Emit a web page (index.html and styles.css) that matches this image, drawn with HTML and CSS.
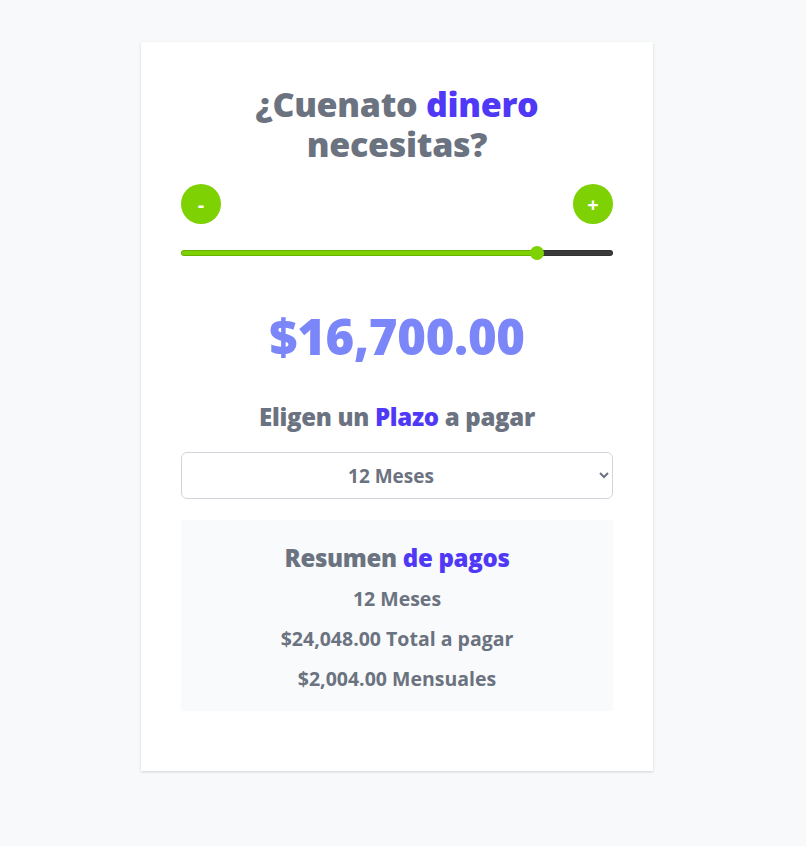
FILE: index.html
```html
<!DOCTYPE html>
<html lang="es">
<head>
  <meta charset="UTF-8">
  <meta name="viewport" content="width=device-width, initial-scale=1.0">
  <title>Prestamos</title>
  <link rel="stylesheet" href="styles.css">
</head>
<body>
  <div class="card">
    <h1 class="title">¿Cuenato <span class="accent">dinero</span> necesitas?</h1>

    <div class="buttons">
      <button class="round-btn">-</button>
      <button class="round-btn">+</button>
    </div>

    <input class="slider" type="range" min="0" max="20000" step="100" value="16700" style="background: linear-gradient(to right, #7ed102 0%, #7ed102 83.5%, #3a3a3a 83.5%, #3a3a3a 100%);">

    <p class="amount">$16,700.00</p>

    <h2 class="subtitle">Eligen un <span class="accent">Plazo</span> a pagar</h2>

    <select class="plazo">
      <option value="6">6 Meses</option>
      <option value="12" selected>12 Meses</option>
      <option value="24">24 Meses</option>
    </select>

    <div class="summary">
      <h2 class="subtitle">Resumen <span class="accent">de pagos</span></h2>
      <p class="line">12 Meses</p>
      <p class="line">$24,048.00 Total a pagar</p>
      <p class="line">$2,004.00 Mensuales</p>
    </div>
  </div>
</body>
</html>
```

FILE: styles.css
```css
body{
  margin: 0;
  padding: 42px 12px 75px 0;
  background: #f8f9fb;
  font-family: "Open Sans", "Noto Sans", sans-serif;
  color: #6b7280;
}

.card{
  width: 512px;
  margin: 0 auto;
  box-sizing: border-box;
  padding: 40px 40px 60px;
  background: white;
  box-shadow: 0 1px 3px rgba(0,0,0,0.1), 0 1px 2px rgba(0,0,0,0.06);
}

.title{
  margin: 0;
  padding-top: 2px;
  font-size: 34px;
  line-height: 40px;
  font-weight: 800;
  text-align: center;
  letter-spacing: -0.3px;
}

.accent{
  color: #4f39f6;
}

.buttons{
  display: flex;
  justify-content: space-between;
  margin-top: 20px;
}

.round-btn{
  width: 40px;
  height: 40px;
  border: none;
  border-radius: 50%;
  background: #7ed102;
  color: white;
  font-family: inherit;
  font-size: 20px;
  font-weight: 700;
  padding: 0;
  cursor: pointer;
}

.slider{
  -webkit-appearance: none;
  appearance: none;
  display: block;
  width: 100%;
  height: 6px;
  margin: 26px 0 0;
  border-radius: 3px;
  box-shadow: inset 0 0 0 1px rgba(0,0,0,0.15);
  outline: none;
}
.slider::-webkit-slider-thumb{
  -webkit-appearance: none;
  appearance: none;
  width: 14px;
  height: 14px;
  border-radius: 50%;
  background: #7ed102;
  border: none;
  cursor: pointer;
}

.amount{
  margin: 50px 0 0;
  font-size: 49px;
  line-height: 60px;
  font-weight: 800;
  text-align: center;
  color: #7b86f8;
  letter-spacing: -0.3px;
}

.subtitle{
  margin: 35px 0 0;
  font-size: 24px;
  line-height: 32px;
  font-weight: 800;
  text-align: center;
  letter-spacing: -0.3px;
}

.plazo{
  display: block;
  width: 100%;
  height: 47px;
  margin-top: 19px;
  border: 1px solid #d1d5db;
  border-radius: 6px;
  background: white;
  color: #6b7280;
  font-family: inherit;
  font-size: 19px;
  font-weight: 700;
  text-align: center;
  text-align-last: center;
}

.summary{
  margin-top: 21px;
  padding: 22px 0 17px;
  background: #f9fafb;
  text-align: center;
}
.summary .subtitle{
  margin: 0;
}

.line{
  margin: 9px 0 0;
  font-size: 19.5px;
  line-height: 31px;
  font-weight: 700;
}
```
